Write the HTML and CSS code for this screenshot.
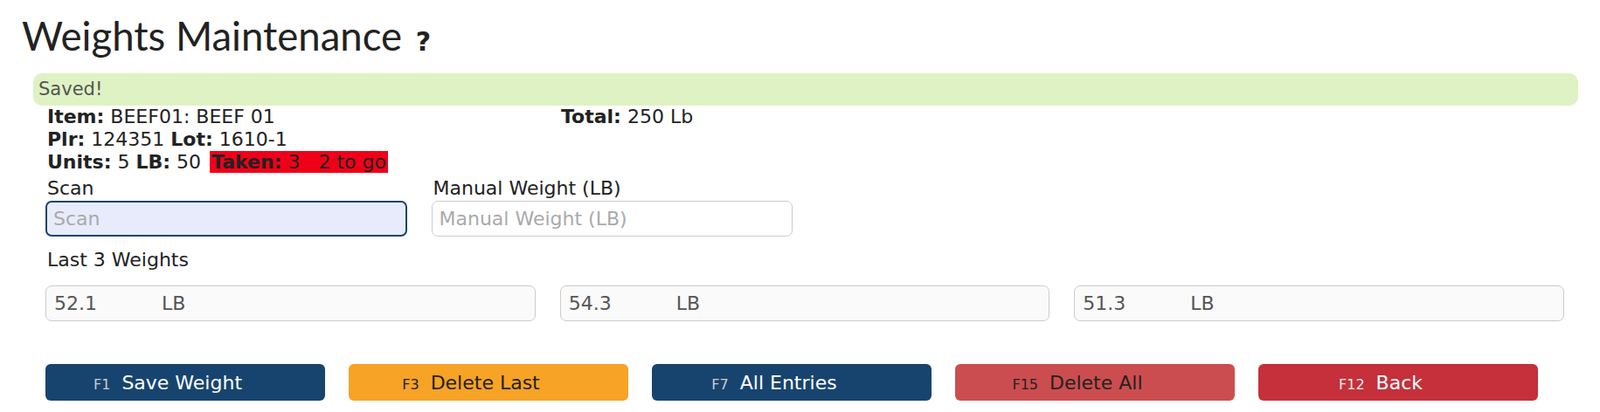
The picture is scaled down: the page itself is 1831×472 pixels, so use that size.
FILE: index.html
```html
<!DOCTYPE html>
<html lang="en">
<head>
    <meta charset="UTF-8">
    <meta name="viewport" content="width=device-width, initial-scale=1.0">
    <title>Weights Maintenance</title>
    <link rel="stylesheet" href="styles.css">
</head>
<body>
    <h1 class="page-title">Weights Maintenance <span class="help">?</span></h1>

    <!-- Status message -->
    <div class="alert-saved">Saved!</div>

    <div class="content">
        <div class="info-grid">
            <div class="info-col">
                <div><b>Item:</b> BEEF01: BEEF 01</div>
                <div><b>Plr:</b> 124351 <b>Lot:</b> 1610-1</div>
                <div><b>Units:</b> 5 <b>LB:</b> 50 <span class="taken"><b>Taken:</b> 3&nbsp;&nbsp; 2 to go</span></div>
            </div>
            <div class="info-col">
                <div><b>Total:</b> 250 Lb</div>
            </div>
        </div>

        <div class="entry-row">
            <div class="field">
                <label for="scan">Scan</label>
                <input id="scan" class="input input-focus" type="text" placeholder="Scan" autofocus>
            </div>
            <div class="field">
                <label for="manual">Manual Weight (LB)</label>
                <input id="manual" class="input" type="text" placeholder="Manual Weight (LB)">
            </div>
        </div>

        <div class="section-label">Last 3 Weights</div>
        <div class="weights">
            <div class="weight-box"><span class="val">52.1</span><span>LB</span></div>
            <div class="weight-box"><span class="val">54.3</span><span>LB</span></div>
            <div class="weight-box"><span class="val">51.3</span><span>LB</span></div>
        </div>

        <!-- Function key buttons -->
        <div class="actions">
            <button class="btn btn-navy"><span class="fkey">F1</span>Save Weight</button>
            <button class="btn btn-orange"><span class="fkey">F3</span>Delete Last</button>
            <button class="btn btn-navy"><span class="fkey">F7</span>All Entries</button>
            <button class="btn btn-soft-red"><span class="fkey">F15</span>Delete All</button>
            <button class="btn btn-red"><span class="fkey">F12</span>Back</button>
        </div>
    </div>
</body>
</html>
```

FILE: styles.css
```css
body {
    margin: 0;
    font-family: 'DejaVu Sans', sans-serif;
    font-size: 22px;
    color: #222;
    background-color: #fff;
}

.page-title {
    margin: 12px 0 0 25px;
    font-family: 'Lato', sans-serif;
    font-weight: 400;
    font-size: 45.5px;
    line-height: 57px;
    color: #222;
}

.help {
    font-family: 'DejaVu Sans', sans-serif;
    font-weight: bold;
    font-size: 30px;
    margin-left: 4px;
}

/* Saved message bar */
.alert-saved {
    margin: 8px 25px 0 38px;
    height: 37px;
    line-height: 37px;
    padding-left: 6px;
    background-color: #dff2c3;
    border-radius: 10px;
    color: #555;
    font-size: 21px;
}

.content {
    padding: 0 41px 0 52px;
}

.info-grid {
    display: grid;
    grid-template-columns: repeat(3, 1fr);
    column-gap: 28px;
    padding-left: 2px;
    line-height: 26px;
}

.taken {
    margin-left: 3px;
    padding: 0 2px;
    background-color: #f00018;
}

.entry-row {
    display: grid;
    grid-template-columns: repeat(4, 1fr);
    column-gap: 28px;
    margin-top: 4px;
}

.field label {
    display: block;
    padding-left: 2px;
    line-height: 26px;
    margin-bottom: 1px;
}

.input {
    box-sizing: border-box;
    width: 100%;
    height: 41px;
    padding: 0 8px;
    border: 1px solid #ccc;
    border-radius: 7px;
    font-family: 'DejaVu Sans', sans-serif;
    font-size: 22px;
    color: #333;
    background-color: #fff;
}

.input::placeholder {
    color: #aaa;
}

.input-focus {
    border: 2px solid #17446e;
    padding: 0 7px;
    background-color: #e8ebfb;
    outline: none;
}

.section-label {
    margin-top: 14px;
    padding-left: 2px;
    line-height: 26px;
}

.weights {
    display: grid;
    grid-template-columns: repeat(3, 1fr);
    column-gap: 28px;
    margin-top: 16px;
}

.weight-box {
    display: flex;
    align-items: center;
    box-sizing: border-box;
    height: 41px;
    padding: 0 9px;
    border: 1px solid #ccc;
    border-radius: 7px;
    background-color: #fafafa;
    color: #555;
}

.weight-box .val {
    width: 123px;
}

/* Buttons */
.actions {
    display: flex;
    gap: 27px;
    margin-top: 49px;
}

.btn {
    width: 320px;
    height: 42px;
    padding: 0 40px 0 0;
    border: none;
    border-radius: 6px;
    font-family: 'DejaVu Sans', sans-serif;
    font-size: 22px;
    display: flex;
    align-items: center;
    justify-content: center;
    cursor: pointer;
}

.fkey {
    font-size: 16px;
    margin-right: 13px;
    margin-top: 4px;
}

.btn-navy {
    background-color: #17446e;
    color: #fff;
}

.btn-navy .fkey {
    color: #ccc;
}

.btn-orange {
    background-color: #f7a325;
    color: #222;
}

.btn-soft-red {
    background-color: #cc4d4f;
    color: #222;
}

.btn-red {
    background-color: #c5303a;
    color: #fff;
}

.btn-red .fkey {
    color: #eee;
}
```
